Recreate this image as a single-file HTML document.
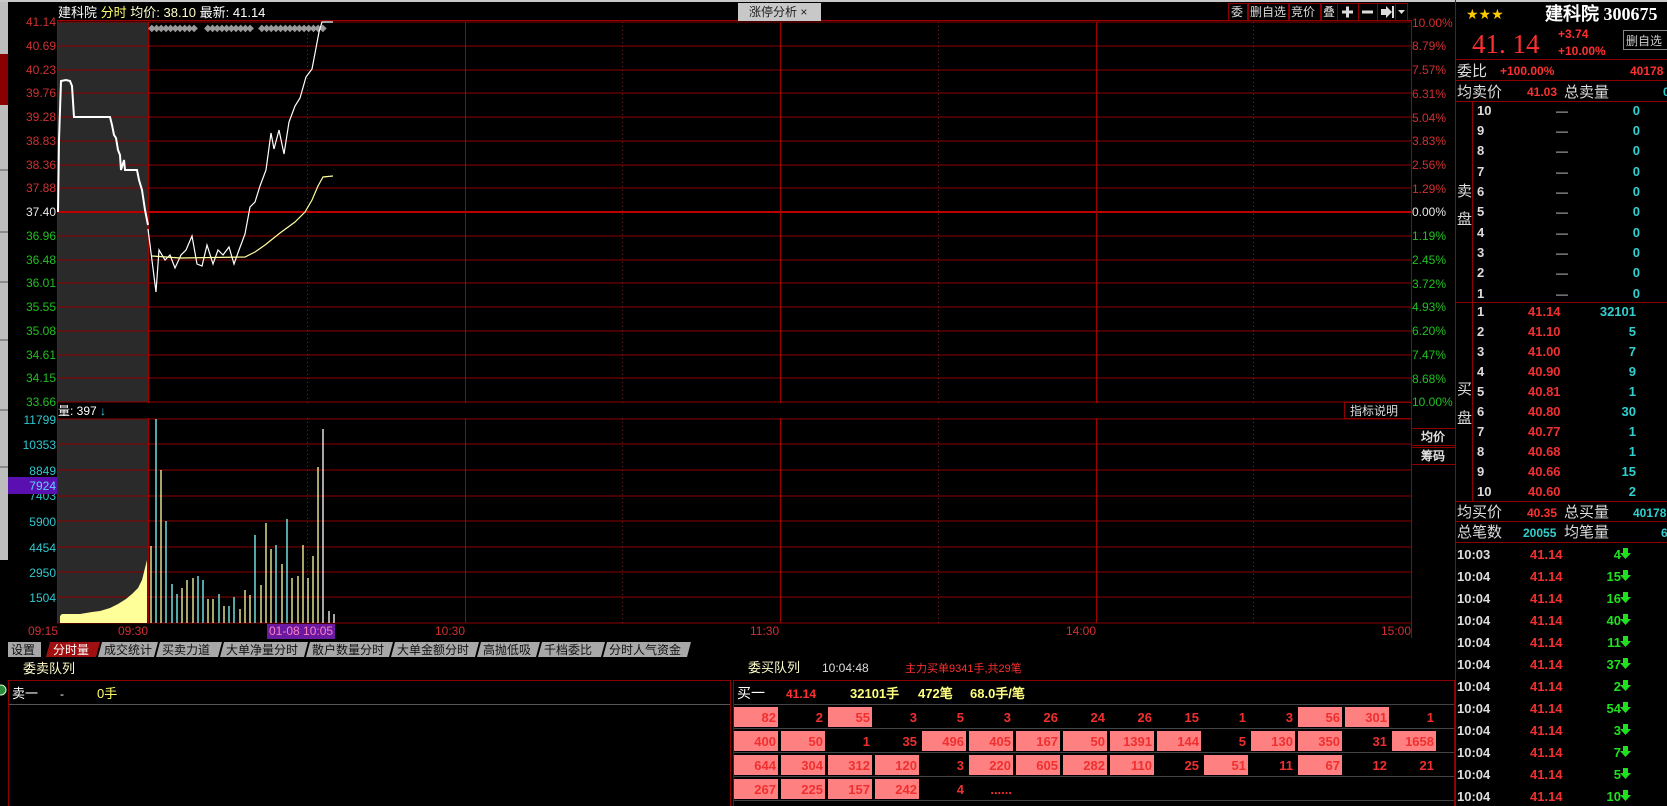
<!DOCTYPE html>
<html><head><meta charset="utf-8"><style>
html,body{margin:0;padding:0;background:#000;width:1667px;height:806px;overflow:hidden}
svg{display:block;font-family:"Liberation Sans","WenQuanYi Zen Hei",sans-serif;font-size:12px}
.b{font-weight:bold}
</style></head><body>
<svg width="1667" height="806" viewBox="0 0 1667 806" xmlns="http://www.w3.org/2000/svg">
<rect width="1667" height="806" fill="#000"/>
<rect x="0" y="0" width="1667" height="2" fill="#c8c8c8"/>
<!-- left strip -->
<rect x="0" y="2" width="8" height="558" fill="#bdbdbd"/>
<rect x="0" y="54" width="8" height="51" fill="#8a0000"/>
<g stroke="#555" stroke-width="1"><line x1="0" y1="170" x2="8" y2="170"/><line x1="0" y1="232" x2="8" y2="232"/><line x1="0" y1="282" x2="8" y2="282"/><line x1="0" y1="340" x2="8" y2="340"/><line x1="0" y1="410" x2="8" y2="410"/><line x1="0" y1="467" x2="8" y2="467"/></g>
<!-- premarket shading -->
<rect x="58" y="22" width="90" height="380" fill="#2a2a2a"/>
<rect x="58" y="419" width="90" height="204" fill="#2a2a2a"/>
<!-- price grid -->
<g stroke="#8c0000" stroke-width="1">
<line x1="57" y1="22" x2="1411" y2="22"/><line x1="57" y1="46" x2="1411" y2="46"/><line x1="57" y1="70" x2="1411" y2="70"/><line x1="57" y1="93" x2="1411" y2="93"/><line x1="57" y1="117" x2="1411" y2="117"/><line x1="57" y1="141" x2="1411" y2="141"/><line x1="57" y1="165" x2="1411" y2="165"/><line x1="57" y1="188" x2="1411" y2="188"/>
<line x1="57" y1="236" x2="1411" y2="236"/><line x1="57" y1="260" x2="1411" y2="260"/><line x1="57" y1="283" x2="1411" y2="283"/><line x1="57" y1="307" x2="1411" y2="307"/><line x1="57" y1="331" x2="1411" y2="331"/><line x1="57" y1="355" x2="1411" y2="355"/><line x1="57" y1="378" x2="1411" y2="378"/><line x1="57" y1="402" x2="1411" y2="402"/>
<line x1="57" y1="419" x2="1411" y2="419"/><line x1="57" y1="444" x2="1411" y2="444"/><line x1="57" y1="470" x2="1411" y2="470"/><line x1="57" y1="496" x2="1411" y2="496"/><line x1="57" y1="521" x2="1411" y2="521"/><line x1="57" y1="547" x2="1411" y2="547"/><line x1="57" y1="572" x2="1411" y2="572"/><line x1="57" y1="597" x2="1411" y2="597"/><line x1="57" y1="623" x2="1411" y2="623"/>
</g>
<line x1="57" y1="212" x2="1411" y2="212" stroke="#c00000" stroke-width="2"/>
<g stroke="#a00000" stroke-width="1">
<line x1="57.5" y1="20" x2="57.5" y2="623"/><line x1="148.5" y1="22" x2="148.5" y2="623"/><line x1="465.5" y1="22" x2="465.5" y2="623"/><line x1="780.5" y1="22" x2="780.5" y2="623"/><line x1="1096.5" y1="22" x2="1096.5" y2="623"/><line x1="1411.5" y1="20" x2="1411.5" y2="638"/><line x1="1455.5" y1="0" x2="1455.5" y2="806"/>
<line x1="57" y1="20.5" x2="1411" y2="20.5"/>
</g>
<g stroke="#802020" stroke-width="1" stroke-dasharray="1,3">
<line x1="307.5" y1="22" x2="307.5" y2="623"/><line x1="622.5" y1="22" x2="622.5" y2="623"/><line x1="938.5" y1="22" x2="938.5" y2="623"/><line x1="1253.5" y1="22" x2="1253.5" y2="623"/>
</g>
<!-- header -->
<text x="58" y="17" fill="#fff" font-size="13">建科院 <tspan fill="#ffff66">分时</tspan> <tspan fill="#ffffcc">均价: 38.10</tspan> 最新: 41.14</text>
<rect x="738" y="3" width="83" height="18" fill="#c8c8c8"/>
<text x="749" y="16" fill="#222">涨停分析 ×</text>
<g stroke="#8c0000" fill="none"><rect x="1228.5" y="3.5" width="19" height="17"/><rect x="1248.5" y="3.5" width="40" height="17"/><rect x="1289.5" y="3.5" width="31" height="17"/><rect x="1321.5" y="3.5" width="16" height="17"/><rect x="1337.5" y="3.5" width="21" height="17"/><rect x="1358.5" y="3.5" width="19" height="17"/><rect x="1377.5" y="3.5" width="18" height="17"/><rect x="1395.5" y="3.5" width="12" height="17"/></g>
<text x="1231" y="16" fill="#ddd">委</text><text x="1250" y="16" fill="#ddd">删自选</text><text x="1291" y="16" fill="#ddd">竞价</text><text x="1323" y="16" fill="#ddd">叠</text>
<rect x="1342" y="10.5" width="11" height="3" fill="#ddd"/><rect x="1346" y="6.5" width="3" height="11" fill="#ddd"/>
<rect x="1362" y="10.5" width="11" height="3" fill="#ddd"/>
<path d="M1381,9h5v-3l6,6l-6,6v-3h-5z" fill="#ddd"/><rect x="1392" y="6" width="2" height="12" fill="#ddd"/>
<path d="M1398,10h7l-3.5,4z" fill="#ddd"/>
<!-- diamonds -->
<g fill="#9a9a9a" font-size="10" font-family="DejaVu Sans,sans-serif"><text x="148" y="31" letter-spacing="-3">◆◆◆◆◆◆◆◆◆◆</text><text x="204" y="31" letter-spacing="-3">◆◆◆◆◆◆◆◆◆◆</text><text x="258" y="31" letter-spacing="-3">◆◆◆◆◆◆◆◆◆◆◆◆◆◆</text></g>
<!-- left axis -->
<g text-anchor="end">
<g fill="#d03030"><text x="56" y="26">41.14</text><text x="56" y="50">40.69</text><text x="56" y="74">40.23</text><text x="56" y="97">39.76</text><text x="56" y="121">39.28</text><text x="56" y="145">38.83</text><text x="56" y="169">38.36</text><text x="56" y="192">37.88</text></g>
<text x="56" y="216" fill="#e8e8e8">37.40</text>
<g fill="#20c020"><text x="56" y="240">36.96</text><text x="56" y="264">36.48</text><text x="56" y="287">36.01</text><text x="56" y="311">35.55</text><text x="56" y="335">35.08</text><text x="56" y="359">34.61</text><text x="56" y="382">34.15</text><text x="56" y="406">33.66</text></g>
<g fill="#30c8d0"><text x="56" y="424">11799</text><text x="56" y="449">10353</text><text x="56" y="475">8849</text><text x="56" y="500">7403</text><text x="56" y="526">5900</text><text x="56" y="552">4454</text><text x="56" y="577">2950</text><text x="56" y="602">1504</text></g>
</g>
<rect x="8" y="477" width="49" height="17" fill="#5a10b0"/>
<text x="56" y="490" fill="#60d0ff" text-anchor="end">7924</text>
<!-- right axis -->
<g fill="#d03030"><text x="1412" y="27">10.00%</text><text x="1412" y="50">8.79%</text><text x="1412" y="74">7.57%</text><text x="1412" y="98">6.31%</text><text x="1412" y="122">5.04%</text><text x="1412" y="145">3.83%</text><text x="1412" y="169">2.56%</text><text x="1412" y="193">1.29%</text></g>
<text x="1412" y="216" fill="#e8e8e8">0.00%</text>
<g fill="#20c020"><text x="1412" y="240">1.19%</text><text x="1412" y="264">2.45%</text><text x="1412" y="288">3.72%</text><text x="1412" y="311">4.93%</text><text x="1412" y="335">6.20%</text><text x="1412" y="359">7.47%</text><text x="1412" y="383">8.68%</text><text x="1412" y="406">10.00%</text></g>
<!-- price lines -->
<polyline fill="none" stroke="#fff" stroke-width="2" points="58,212 59,140 61,81 66,80 70,81 72,86 74,117 110,117 112,125 114,135 116,138 118,150 120,155 121,170 124,160 125,170 137,170 139,180 142,190 145,210 148,225"/>
<polyline fill="none" stroke="#fff" stroke-width="1.2" points="148,229 156,292 159,250 165,260 170,255 175,268 181,255 186,250 192,236 197,264 202,266 207,245 213,264 218,250 223,255 229,247 234,264 239,250 245,234 250,207 255,202 260,186 266,170 271,133 274,149 279,130 284,154 289,122 295,106 300,98 306,77 312,69 316,48 319,32 322,22 333,22"/>
<polyline fill="none" stroke="#ffffa0" stroke-width="1.2" points="152,256 180,258 245,257 255,252 265,245 280,233 295,222 305,212 312,200 318,186 323,177 333,176"/>
<!-- volume header -->
<rect x="58" y="403" width="1353" height="15" fill="#000"/>
<text x="58" y="415" fill="#fff">量: 397 <tspan fill="#40d0ff" class="b">↓</tspan></text>
<rect x="1344.5" y="402.5" width="67" height="16" fill="#000" stroke="#8c0000"/>
<text x="1350" y="415" fill="#ddd">指标说明</text>
<rect x="1411.5" y="428.5" width="44" height="17" fill="#000" stroke="#8c0000"/><text x="1421" y="441" fill="#ddd" class="b">均价</text>
<rect x="1411.5" y="447.5" width="44" height="17" fill="#000" stroke="#8c0000"/><text x="1421" y="460" fill="#ddd" class="b">筹码</text>
<!-- volume bars -->
<polygon fill="#ffff99" points="60,623 60,616 62,614 80,614 92,612 100,611 110,608 118,604 126,599 132,594 138,588 142,580 145,568 147,560 147,623"/>
<g stroke-width="1.3">
<line x1="151" y1="623" x2="151" y2="546" stroke="#ffffa0"/><line x1="156" y1="623" x2="156" y2="419" stroke="#80ffff"/><line x1="161" y1="623" x2="161" y2="470" stroke="#ffffa0"/><line x1="166" y1="623" x2="166" y2="521" stroke="#80ffff"/><line x1="172" y1="623" x2="172" y2="584" stroke="#80ffff"/><line x1="177" y1="623" x2="177" y2="594" stroke="#80ffff"/><line x1="182" y1="623" x2="182" y2="588" stroke="#ffffa0"/><line x1="187" y1="623" x2="187" y2="580" stroke="#ffffa0"/><line x1="193" y1="623" x2="193" y2="578" stroke="#ffffa0"/><line x1="198" y1="623" x2="198" y2="576" stroke="#80ffff"/><line x1="203" y1="623" x2="203" y2="580" stroke="#80ffff"/><line x1="208" y1="623" x2="208" y2="599" stroke="#ffffa0"/><line x1="213" y1="623" x2="213" y2="599" stroke="#ffffa0"/><line x1="219" y1="623" x2="219" y2="594" stroke="#80ffff"/><line x1="224" y1="623" x2="224" y2="606" stroke="#ffffa0"/><line x1="229" y1="623" x2="229" y2="606" stroke="#80ffff"/><line x1="234" y1="623" x2="234" y2="597" stroke="#80ffff"/><line x1="240" y1="623" x2="240" y2="609" stroke="#ffffa0"/><line x1="245" y1="623" x2="245" y2="590" stroke="#ffffa0"/><line x1="250" y1="623" x2="250" y2="595" stroke="#ffffa0"/><line x1="255" y1="623" x2="255" y2="535" stroke="#80ffff"/><line x1="261" y1="623" x2="261" y2="585" stroke="#ffffa0"/><line x1="266" y1="623" x2="266" y2="523" stroke="#ffffa0"/><line x1="271" y1="623" x2="271" y2="549" stroke="#ffffa0"/><line x1="276" y1="623" x2="276" y2="545" stroke="#80ffff"/><line x1="282" y1="623" x2="282" y2="564" stroke="#ffffa0"/><line x1="287" y1="623" x2="287" y2="519" stroke="#80ffff"/><line x1="292" y1="623" x2="292" y2="578" stroke="#ffffa0"/><line x1="298" y1="623" x2="298" y2="576" stroke="#ffffa0"/><line x1="303" y1="623" x2="303" y2="545" stroke="#ffffa0"/><line x1="308" y1="623" x2="308" y2="578" stroke="#ffffa0"/><line x1="313" y1="623" x2="313" y2="556" stroke="#ffffa0"/><line x1="318" y1="623" x2="318" y2="467" stroke="#ffffa0"/><line x1="323" y1="623" x2="323" y2="429" stroke="#fff"/><line x1="329" y1="623" x2="329" y2="611" stroke="#fff"/><line x1="334" y1="623" x2="334" y2="614" stroke="#fff"/>
</g>
<!-- time axis -->
<g fill="#d03030"><text x="28" y="635">09:15</text><text x="118" y="635">09:30</text><text x="435" y="635">10:30</text><text x="750" y="635">11:30</text><text x="1066" y="635">14:00</text><text x="1381" y="635">15:00</text></g>
<rect x="267" y="624" width="68" height="15" fill="#6a1aa0"/><text x="269" y="635" fill="#ff80c0">01-08 10:05</text>
<!-- tabs -->
<rect x="8" y="642" width="33" height="15" fill="#a8a8a8"/><text x="11" y="654" fill="#111">设置</text>
<polygon points="50,642 100,642 96,657 46,657" fill="#a01010"/><text x="53" y="654" fill="#fff">分时量</text>
<g fill="#a8a8a8"><polygon points="102,642 158,642 154,657 98,657"/><polygon points="160,642 222,642 218,657 156,657"/><polygon points="224,642 308,642 304,657 220,657"/><polygon points="310,642 393,642 389,657 306,657"/><polygon points="395,642 479,642 475,657 391,657"/><polygon points="481,642 540,642 536,657 477,657"/><polygon points="542,642 605,642 601,657 538,657"/><polygon points="607,642 691,642 687,657 603,657"/></g>
<g fill="#111"><text x="104" y="654">成交统计</text><text x="162" y="654">买卖力道</text><text x="226" y="654">大单净量分时</text><text x="312" y="654">散户数量分时</text><text x="397" y="654">大单金额分时</text><text x="483" y="654">高抛低吸</text><text x="544" y="654">千档委比</text><text x="609" y="654">分时人气资金</text></g>
<!-- sell queue -->
<text x="23" y="673" fill="#ffffcc" font-size="13">委卖队列</text>
<rect x="8.5" y="680.5" width="722" height="130" fill="none" stroke="#8c0000"/>
<line x1="9" y1="704.5" x2="730" y2="704.5" stroke="#555"/>
<text x="12" y="698" fill="#fff" font-size="13">卖一</text><text x="60" y="698" fill="#fff">-</text><text x="97" y="698" fill="#ffff66" font-size="13">0手</text>
<circle cx="1" cy="690" r="5" fill="#2a8a3a" stroke="#cfc" stroke-width="1"/>
<!-- buy queue -->
<text x="748" y="672" fill="#ffffcc" font-size="13">委买队列</text><text x="822" y="672" fill="#ddd">10:04:48</text><text x="905" y="672" fill="#ff3030" font-size="11">主力买单9341手,共29笔</text>
<rect x="733.5" y="680.5" width="721" height="130" fill="none" stroke="#8c0000"/>
<g stroke="#444"><line x1="734" y1="704.5" x2="1454" y2="704.5"/><line x1="734" y1="728.5" x2="1454" y2="728.5"/><line x1="734" y1="752.5" x2="1454" y2="752.5"/><line x1="734" y1="776.5" x2="1454" y2="776.5"/><line x1="734" y1="800.5" x2="1454" y2="800.5"/></g>
<text x="737" y="698" fill="#fff" font-size="14">买一</text><text x="786" y="698" fill="#ff3030" class="b">41.14</text><text x="850" y="698" fill="#ffff80" class="b" font-size="13">32101手</text><text x="918" y="698" fill="#ffff80" class="b" font-size="13">472笔</text><text x="970" y="698" fill="#ffff80" class="b" font-size="13">68.0手/笔</text>
<g fill="#ff8080">
<rect x="734" y="707" width="44" height="20"/><rect x="828" y="707" width="44" height="20"/><rect x="1298" y="707" width="44" height="20"/><rect x="1345" y="707" width="44" height="20"/>
<rect x="734" y="731" width="44" height="20"/><rect x="781" y="731" width="44" height="20"/><rect x="922" y="731" width="44" height="20"/><rect x="969" y="731" width="44" height="20"/><rect x="1016" y="731" width="44" height="20"/><rect x="1063" y="731" width="44" height="20"/><rect x="1110" y="731" width="44" height="20"/><rect x="1157" y="731" width="44" height="20"/><rect x="1251" y="731" width="44" height="20"/><rect x="1298" y="731" width="44" height="20"/><rect x="1392" y="731" width="44" height="20"/>
<rect x="734" y="755" width="44" height="20"/><rect x="781" y="755" width="44" height="20"/><rect x="828" y="755" width="44" height="20"/><rect x="875" y="755" width="44" height="20"/><rect x="969" y="755" width="44" height="20"/><rect x="1016" y="755" width="44" height="20"/><rect x="1063" y="755" width="44" height="20"/><rect x="1110" y="755" width="44" height="20"/><rect x="1204" y="755" width="44" height="20"/><rect x="1298" y="755" width="44" height="20"/>
<rect x="734" y="779" width="44" height="20"/><rect x="781" y="779" width="44" height="20"/><rect x="828" y="779" width="44" height="20"/><rect x="875" y="779" width="44" height="20"/>
</g>
<g fill="#f03030" class="b" text-anchor="end" font-size="13">
<text x="776" y="722">82</text><text x="823" y="722">2</text><text x="870" y="722">55</text><text x="917" y="722">3</text><text x="964" y="722">5</text><text x="1011" y="722">3</text><text x="1058" y="722">26</text><text x="1105" y="722">24</text><text x="1152" y="722">26</text><text x="1199" y="722">15</text><text x="1246" y="722">1</text><text x="1293" y="722">3</text><text x="1340" y="722">56</text><text x="1387" y="722">301</text><text x="1434" y="722">1</text>
<text x="776" y="746">400</text><text x="823" y="746">50</text><text x="870" y="746">1</text><text x="917" y="746">35</text><text x="964" y="746">496</text><text x="1011" y="746">405</text><text x="1058" y="746">167</text><text x="1105" y="746">50</text><text x="1152" y="746">1391</text><text x="1199" y="746">144</text><text x="1246" y="746">5</text><text x="1293" y="746">130</text><text x="1340" y="746">350</text><text x="1387" y="746">31</text><text x="1434" y="746">1658</text>
<text x="776" y="770">644</text><text x="823" y="770">304</text><text x="870" y="770">312</text><text x="917" y="770">120</text><text x="964" y="770">3</text><text x="1011" y="770">220</text><text x="1058" y="770">605</text><text x="1105" y="770">282</text><text x="1152" y="770">110</text><text x="1199" y="770">25</text><text x="1246" y="770">51</text><text x="1293" y="770">11</text><text x="1340" y="770">67</text><text x="1387" y="770">12</text><text x="1434" y="770">21</text>
<text x="776" y="794">267</text><text x="823" y="794">225</text><text x="870" y="794">157</text><text x="917" y="794">242</text><text x="964" y="794">4</text><text x="1012" y="794">......</text>
</g>
<!-- right panel -->
<text x="1466" y="19" fill="#ffcc00" font-size="14">★★★</text>
<text x="1545" y="20" fill="#fff" class="b" font-size="18" font-family="Liberation Serif,WenQuanYi Zen Hei,serif">建科院 300675</text>
<text x="1472" y="53" fill="#ff3030" font-size="27" font-family="Liberation Serif,serif">41. 14</text>
<text x="1558" y="38" fill="#ff3030" class="b" font-size="12">+3.74</text><text x="1558" y="55" fill="#ff3030" class="b" font-size="12">+10.00%</text>
<rect x="1623.5" y="30.5" width="50" height="19" fill="none" stroke="#888"/><text x="1626" y="45" fill="#ccc">删自选</text>
<g stroke="#8c0000"><line x1="1456" y1="59.5" x2="1667" y2="59.5"/><line x1="1456" y1="80.5" x2="1667" y2="80.5"/><line x1="1456" y1="101.5" x2="1667" y2="101.5"/><line x1="1456" y1="302.5" x2="1667" y2="302.5"/><line x1="1456" y1="501.5" x2="1667" y2="501.5"/><line x1="1456" y1="521.5" x2="1667" y2="521.5"/><line x1="1456" y1="542.5" x2="1667" y2="542.5"/><line x1="1472.5" y1="101" x2="1472.5" y2="501"/></g>
<text x="1457" y="76" fill="#ddd" font-size="15">委比</text><text x="1500" y="75" fill="#ff3030" class="b">+100.00%</text><text x="1630" y="75" fill="#ff3030" class="b">40178</text>
<text x="1457" y="97" fill="#ddd" font-size="15">均卖价</text><text x="1527" y="96" fill="#ff3030" class="b">41.03</text><text x="1564" y="97" fill="#ddd" font-size="15">总卖量</text><text x="1663" y="96" fill="#30d0d0" class="b">0</text>
<text x="1457" y="196" fill="#ddd" font-size="15">卖</text><text x="1457" y="224" fill="#ddd" font-size="15">盘</text>
<text x="1457" y="394" fill="#ddd" font-size="15">买</text><text x="1457" y="423" fill="#ddd" font-size="15">盘</text>
<g fill="#ddd" class="b" font-size="13">
<text x="1477" y="115">10</text><text x="1477" y="135">9</text><text x="1477" y="155">8</text><text x="1477" y="176">7</text><text x="1477" y="196">6</text><text x="1477" y="216">5</text><text x="1477" y="237">4</text><text x="1477" y="257">3</text><text x="1477" y="277">2</text><text x="1477" y="298">1</text>
<text x="1477" y="316">1</text><text x="1477" y="336">2</text><text x="1477" y="356">3</text><text x="1477" y="376">4</text><text x="1477" y="396">5</text><text x="1477" y="416">6</text><text x="1477" y="436">7</text><text x="1477" y="456">8</text><text x="1477" y="476">9</text><text x="1477" y="496">10</text>
</g>
<g fill="#ddd"><text x="1556" y="115">—</text><text x="1556" y="135">—</text><text x="1556" y="155">—</text><text x="1556" y="176">—</text><text x="1556" y="196">—</text><text x="1556" y="216">—</text><text x="1556" y="237">—</text><text x="1556" y="257">—</text><text x="1556" y="277">—</text><text x="1556" y="298">—</text></g>
<g fill="#30d0d0" class="b" text-anchor="end" font-size="13">
<text x="1640" y="115">0</text><text x="1640" y="135">0</text><text x="1640" y="155">0</text><text x="1640" y="176">0</text><text x="1640" y="196">0</text><text x="1640" y="216">0</text><text x="1640" y="237">0</text><text x="1640" y="257">0</text><text x="1640" y="277">0</text><text x="1640" y="298">0</text>
<text x="1636" y="316">32101</text><text x="1636" y="336">5</text><text x="1636" y="356">7</text><text x="1636" y="376">9</text><text x="1636" y="396">1</text><text x="1636" y="416">30</text><text x="1636" y="436">1</text><text x="1636" y="456">1</text><text x="1636" y="476">15</text><text x="1636" y="496">2</text>
</g>
<g fill="#f03030" class="b" font-size="13"><text x="1528" y="316">41.14</text><text x="1528" y="336">41.10</text><text x="1528" y="356">41.00</text><text x="1528" y="376">40.90</text><text x="1528" y="396">40.81</text><text x="1528" y="416">40.80</text><text x="1528" y="436">40.77</text><text x="1528" y="456">40.68</text><text x="1528" y="476">40.66</text><text x="1528" y="496">40.60</text></g>
<text x="1457" y="517" fill="#ddd" font-size="15">均买价</text><text x="1527" y="517" fill="#ff3030" class="b">40.35</text><text x="1564" y="517" fill="#ddd" font-size="15">总买量</text><text x="1633" y="517" fill="#30d0d0" class="b">40178</text>
<text x="1457" y="537" fill="#ddd" font-size="15">总笔数</text><text x="1523" y="537" fill="#30d0d0" class="b">20055</text><text x="1564" y="537" fill="#ddd" font-size="15">均笔量</text><text x="1661" y="537" fill="#30d0d0" class="b">6</text>
<!-- ticks -->
<g fill="#ddd" class="b" font-size="13"><text x="1457" y="559">10:03</text><text x="1457" y="581">10:04</text><text x="1457" y="603">10:04</text><text x="1457" y="625">10:04</text><text x="1457" y="647">10:04</text><text x="1457" y="669">10:04</text><text x="1457" y="691">10:04</text><text x="1457" y="713">10:04</text><text x="1457" y="735">10:04</text><text x="1457" y="757">10:04</text><text x="1457" y="779">10:04</text><text x="1457" y="801">10:04</text></g>
<g fill="#f03030" class="b" font-size="13"><text x="1530" y="559">41.14</text><text x="1530" y="581">41.14</text><text x="1530" y="603">41.14</text><text x="1530" y="625">41.14</text><text x="1530" y="647">41.14</text><text x="1530" y="669">41.14</text><text x="1530" y="691">41.14</text><text x="1530" y="713">41.14</text><text x="1530" y="735">41.14</text><text x="1530" y="757">41.14</text><text x="1530" y="779">41.14</text><text x="1530" y="801">41.14</text></g>
<g fill="#20e020" class="b" font-size="13" text-anchor="end"><text x="1621" y="559">4</text><text x="1621" y="581">15</text><text x="1621" y="603">16</text><text x="1621" y="625">40</text><text x="1621" y="647">11</text><text x="1621" y="669">37</text><text x="1621" y="691">2</text><text x="1621" y="713">54</text><text x="1621" y="735">3</text><text x="1621" y="757">7</text><text x="1621" y="779">5</text><text x="1621" y="801">10</text></g>
<g fill="#20e020"><path d="M1623,548h5v5h3l-5.5,6l-5.5,-6h3z"/><path d="M1623,570h5v5h3l-5.5,6l-5.5,-6h3z"/><path d="M1623,592h5v5h3l-5.5,6l-5.5,-6h3z"/><path d="M1623,614h5v5h3l-5.5,6l-5.5,-6h3z"/><path d="M1623,636h5v5h3l-5.5,6l-5.5,-6h3z"/><path d="M1623,658h5v5h3l-5.5,6l-5.5,-6h3z"/><path d="M1623,680h5v5h3l-5.5,6l-5.5,-6h3z"/><path d="M1623,702h5v5h3l-5.5,6l-5.5,-6h3z"/><path d="M1623,724h5v5h3l-5.5,6l-5.5,-6h3z"/><path d="M1623,746h5v5h3l-5.5,6l-5.5,-6h3z"/><path d="M1623,768h5v5h3l-5.5,6l-5.5,-6h3z"/><path d="M1623,790h5v5h3l-5.5,6l-5.5,-6h3z"/></g>
</svg>
</body></html>
